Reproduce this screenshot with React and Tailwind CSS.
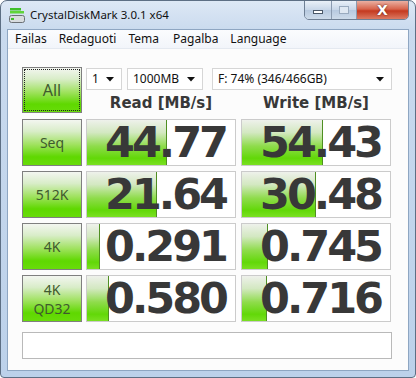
import React from 'react';

const ROWS = [
  { label: ['Seq'], read: '44.77', rw: 80, write: '54.43', ww: 81 },
  { label: ['512K'], read: '21.64', rw: 70, write: '30.48', ww: 74 },
  { label: ['4K'], read: '0.291', rw: 13, write: '0.745', ww: 26 },
  { label: ['4K', 'QD32'], read: '0.580', rw: 22, write: '0.716', ww: 25 },
];

const greenBtn =
  'bg-[linear-gradient(to_bottom,#f3f6f0_0%,#d9edc9_25%,#9fe25e_55%,#5fd800_82%,#68dc0a_100%)]';

const Arrow = () => (
  <svg width="8" height="5" viewBox="0 0 8 5" className="shrink-0">
    <polygon points="0,0 8,0 4,4.5" fill="#111" />
  </svg>
);

const Select = ({ w, children }) => (
  <div
    className={`${w} h-[22px] flex items-center justify-between pl-[5px] pr-[7px] bg-white border border-[#d6d6d6] text-[12px] text-[#111]`}
  >
    <span>{children}</span>
    <Arrow />
  </div>
);

const ValueBox = ({ value, width }) => (
  <div className="relative w-[150px] h-[47px] bg-white border border-[#cbcbcb]">
    <div
      className="absolute left-0 top-0 bottom-0 border-r border-[#4f8f22] bg-[linear-gradient(to_bottom,#eef1eb_0%,#d3e8c1_28%,#8fdc4c_58%,#62d808_85%,#7ae022_100%)]"
      style={{ width }}
    />
    <div className="relative h-full flex items-center justify-end pr-[9px] font-['DejaVu_Sans',sans-serif] font-bold text-[43px] tracking-[-3px] text-[#383838] leading-[45px] whitespace-nowrap">
      {value}
    </div>
  </div>
);

const TitleIcon = () => (
  <svg width="16" height="16" viewBox="0 0 16 16">
    <rect x="1" y="0" width="11" height="2.5" fill="#3fbf2a" />
    <rect x="1" y="3" width="14" height="2.5" fill="#5fd43a" />
    <rect x="0.5" y="7.5" width="15" height="7" rx="2" fill="#d8dcdf" stroke="#6b7075" />
    <rect x="2" y="10" width="3" height="2" fill="#3fbf2a" />
  </svg>
);

export default function App() {
  return (
    <div className="w-[416px] h-[378px] flex flex-col rounded-t-[7px] rounded-b-[4px] border border-[#5d6f84] bg-[linear-gradient(to_bottom,#dde8f5_0%,#c9daee_8%,#bcd1ea_100%)] font-['Noto_Sans',sans-serif] overflow-hidden">
      {/* title bar */}
      <div className="h-[28px] flex items-start shrink-0">
        <div className="pl-[8px] pt-[7px]">
          <TitleIcon />
        </div>
        <div className="pl-[5px] pt-[5px] text-[11.5px] text-[#111]">CrystalDiskMark 3.0.1 x64</div>
        <div className="flex-1" />
        <div className="flex h-[20px] mr-[6px] -mt-px rounded-b-[5px] border border-[#6e7f94] overflow-hidden">
          <div className="w-[27px] flex items-center justify-center bg-[linear-gradient(to_bottom,#e9f0f8,#c7d6e8_50%,#b7c9df_51%,#cddbea)] border-r border-[#8b9bb0]">
            <div className="w-[10px] h-[4px] mt-[4px] bg-white border border-[#4a5868]" />
          </div>
          <div className="w-[25px] flex items-center justify-center bg-[linear-gradient(to_bottom,#e9f0f8,#c7d6e8_50%,#b7c9df_51%,#cddbea)] border-r border-[#8b9bb0]">
            <div className="w-[10px] h-[8px] border border-[#9aabbf] bg-[#dfe8f2]" />
          </div>
          <div className="w-[51px] flex items-center justify-center bg-[linear-gradient(to_bottom,#eab0a2,#d7644c_45%,#c4391f_55%,#dc7a62)] text-white font-['DejaVu_Sans',sans-serif] font-bold text-[14px] leading-none [text-shadow:0_0_2px_#4a1a10]">
            X
          </div>
        </div>
      </div>

      {/* client area */}
      <div className="flex-1 mx-[6px] mb-[6px] flex flex-col border border-[#8ea6c2] bg-[#fcfcfc]">
        {/* menu */}
        <div className="h-[19px] flex items-center pl-[1px] text-[12px] text-[#111] bg-[linear-gradient(to_bottom,#fbfcfe,#f2f5fa)] border-b border-[#e4e9f0]">
          <span className="px-[6px]">Failas</span>
          <span className="px-[6px]">Redaguoti</span>
          <span className="px-[6px]">Tema</span>
          <span className="px-[6px] ml-[2px]">Pagalba</span>
          <span className="px-[6px]">Language</span>
        </div>

        <div className="flex flex-col pl-[14px] pt-[18px]">
          {/* top controls */}
          <div className="flex">
            <div className={`w-[60px] h-[46px] p-px border border-[#7f7f7f] ${greenBtn}`}>
              <div className="w-full h-full border border-dotted border-[#222] flex items-center justify-center text-[16px] text-[#3f5a2e]">
                All
              </div>
            </div>
            <div className="ml-[4px] flex flex-col">
              <div className="flex mt-px">
                <Select w="w-[36px]">1</Select>
                <div className="ml-[5px]">
                  <Select w="w-[76px]">1000MB</Select>
                </div>
                <div className="ml-[9px]">
                  <Select w="w-[180px]">F: 74% (346/466GB)</Select>
                </div>
              </div>
              <div className="flex mt-[2px] font-['DejaVu_Sans',sans-serif] font-bold text-[15px] text-[#383838] h-[22px] items-center">
                <div className="w-[150px] text-center">Read [MB/s]</div>
                <div className="w-[150px] ml-[5px] text-center">Write [MB/s]</div>
              </div>
            </div>
          </div>

          {/* result rows */}
          {ROWS.map((r) => (
            <div key={r.read} className="flex mt-[5px]">
              <div
                className={`w-[60px] h-[47px] border border-[#7f7f7f] ${greenBtn} flex flex-col items-center justify-center text-[14px] leading-[19px] text-[#3f5a2e]`}
              >
                {r.label.map((l) => (
                  <span key={l}>{l}</span>
                ))}
              </div>
              <div className="ml-[4px]">
                <ValueBox value={r.read} width={r.rw} />
              </div>
              <div className="ml-[5px]">
                <ValueBox value={r.write} width={r.ww} />
              </div>
            </div>
          ))}

          {/* comment box */}
          <div className="mt-[10px] w-[370px] h-[27px] bg-white border border-[#b9b9b9]" />
        </div>
      </div>
    </div>
  );
}
